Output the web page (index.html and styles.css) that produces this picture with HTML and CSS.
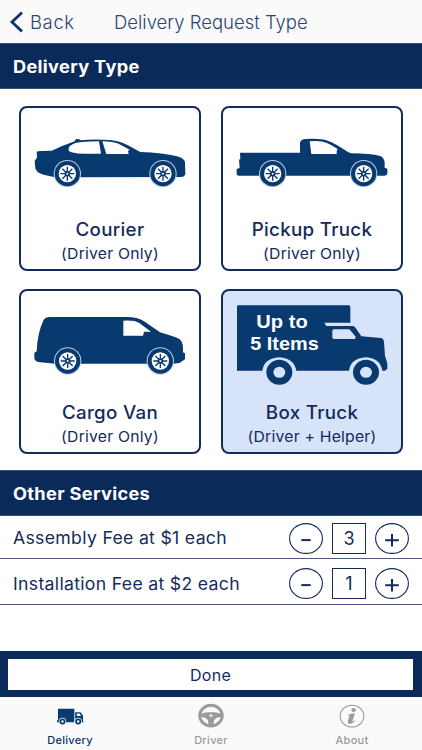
FILE: index.html
```html
<!DOCTYPE html>
<html lang="en">
<head>
    <meta charset="UTF-8">
    <meta name="viewport" content="width=device-width, initial-scale=1.0">
    <title>Delivery Request Type</title>
    <link rel="stylesheet" href="styles.css">
</head>
<body>
    <!-- wheel shared by the car, pickup and van -->
    <svg class="defs" width="0" height="0">
        <symbol id="wheel" viewBox="-44 -44 88 88">
            <circle r="41" fill="#b9cbe0"/>
            <circle r="38" fill="#083a70"/>
            <circle r="26" fill="#fff"/>
            <g stroke="#083a70" stroke-width="4">
                <path d="M0-21V21M-21 0H21M-15-15L15 15M-15 15L15-15"/>
            </g>
            <circle r="8" fill="#083a70"/>
            <circle r="3" fill="#fff"/>
        </symbol>
    </svg>

    <div class="app">
        <header class="navbar">
            <a class="back">
                <svg width="14" height="22" viewBox="0 0 14 22"><path d="M13 1.5L3 11L13 20.5" fill="none" stroke="#0b3468" stroke-width="2.8"/></svg>
                <span>Back</span>
            </a>
            <span class="nav-title">Delivery Request Type</span>
        </header>

        <h2 class="section"><span>Delivery Type</span></h2>

        <div class="cards">
            <div class="card">
                <svg class="vehicle" viewBox="33 24 534 300">
                    <path fill="#083a70" d="M80 155Q84 152 125 152Q160 136 194 124L198 117L208 118L211 121Q250 116 300 120Q331 123 352 135L391 156Q460 158 501 169Q523 175 525 186L526 222Q524 231 513 231L212 232H135L101 224Q79 219 76 205L74 183Q78 178 81 172Z"/>
                    <path fill="#fff" d="M179 139Q191 126 225 125L267 124L273 161H220Q184 160 176 152Q173 145 179 139ZM277 124Q313 124 333 135L359 149L354 153L356 162H289Z"/>
                    <use href="#wheel" x="128" y="177" width="88" height="88"/>
                    <use href="#wheel" x="415" y="177" width="88" height="88"/>
                </svg>
                <div class="name">Courier</div>
                <div class="crew">(Driver Only)</div>
            </div>
            <div class="card">
                <svg class="vehicle" viewBox="33 24 534 300">
                    <path fill="#083a70" d="M84 158H264V129Q265 119 279 117Q325 114 347 122Q368 129 408 156L417 160Q475 160 505 168Q516 173 518 187V203L526 206V221Q525 227 512 227H78L74 223V207L83 204L81 180L85 176Z"/>
                    <path fill="#fff" d="M293 124Q326 121 343 128Q359 134 377 147L374 153V162H298Z"/>
                    <use href="#wheel" x="138" y="177" width="88" height="88"/>
                    <use href="#wheel" x="411" y="177" width="88" height="88"/>
                </svg>
                <div class="name">Pickup Truck</div>
                <div class="crew">(Driver Only)</div>
            </div>
            <div class="card">
                <svg class="vehicle" viewBox="33 27 534 300">
                    <path fill="#083a70" d="M101 113Q106 105 117 105H350Q382 105 401 117L450 151Q493 163 508 171Q519 178 519 199V211L525 214V232L508 243L490 245H135L84 240Q74 237 73 229V213L80 208Q82 153 101 113Z"/>
                    <path fill="#fff" d="M340 116Q374 114 388 123L423 149H402L399 161H340Z"/>
                    <use href="#wheel" x="129" y="193" width="88" height="88"/>
                    <use href="#wheel" x="407" y="193" width="88" height="88"/>
                </svg>
                <div class="name">Cargo Van</div>
                <div class="crew">(Driver Only)</div>
            </div>
            <div class="card selected">
                <svg class="vehicle" viewBox="33 27 534 300">
                    <path fill="#083a70" d="M79 70H410Q415 70 415 75V122H337L343 132H421Q428 132 431 138L448 163L506 168Q515 169 516 180L519 222L526 244V260L519 266H75V74Q75 70 79 70Z"/>
                    <path fill="#d6e3f9" d="M366 142H412L430 163V171H366Q361 171 361 166V147Q361 142 366 142Z"/>
                    <path fill="#d6e3f9" d="M151 267Q155 229 202 226Q247 229 253 267ZM411 267Q415 229 462 226Q506 229 511 267Z"/>
                    <g fill="none" stroke="#083a70" stroke-width="21">
                        <ellipse cx="202" cy="271" rx="28.5" ry="27"/>
                        <ellipse cx="462" cy="271" rx="28.5" ry="27"/>
                    </g>
                    <g class="box-text">
                        <text x="133" y="138" textLength="154" lengthAdjust="spacingAndGlyphs">Up to</text>
                        <text x="115" y="204" textLength="205" lengthAdjust="spacingAndGlyphs">5 Items</text>
                    </g>
                </svg>
                <div class="name">Box Truck</div>
                <div class="crew">(Driver + Helper)</div>
            </div>
        </div>

        <h2 class="section other"><span>Other Services</span></h2>

        <div class="service">
            <span class="fee">Assembly Fee at $1 each</span>
            <div class="stepper">
                <svg class="step" viewBox="0 0 34 31"><ellipse cx="17" cy="15.5" rx="16.4" ry="14.9"/><path d="M12.3 17.1h9.4"/></svg>
                <span class="count">3</span>
                <svg class="step" viewBox="0 0 34 31"><ellipse cx="17" cy="15.5" rx="16.4" ry="14.9"/><path d="M10.2 17.3h13.6M17 11v12.6"/></svg>
            </div>
        </div>
        <div class="service">
            <span class="fee">Installation Fee at $2 each</span>
            <div class="stepper">
                <svg class="step" viewBox="0 0 34 31"><ellipse cx="17" cy="15.5" rx="16.4" ry="14.9"/><path d="M12.3 17.1h9.4"/></svg>
                <span class="count">1</span>
                <svg class="step" viewBox="0 0 34 31"><ellipse cx="17" cy="15.5" rx="16.4" ry="14.9"/><path d="M10.2 17.3h13.6M17 11v12.6"/></svg>
            </div>
        </div>

        <div class="done-bar">
            <button type="button" class="done">Done</button>
        </div>

        <nav class="tabs">
            <a class="tab active">
                <svg width="30" height="28" viewBox="0 0 30 28">
                    <path fill="#083a70" d="M2.500 6h17v14H1.500v-2h1ZM20.300 9.500h5.500l2.700 3.500v6h.5v1h-8.700Z"/>
                    <path fill="#fafafa" d="M22 11h3l1.500 2.500H22Z"/>
                    <g fill="#fafafa"><circle cx="7.200" cy="19.200" r="3.800"/><circle cx="23.500" cy="19.200" r="3.800"/></g>
                    <g fill="#fafafa" stroke="#083a70" stroke-width="1.900"><circle cx="7.200" cy="19.200" r="2.200"/><circle cx="23.500" cy="19.200" r="2.200"/></g>
                </svg>
                <span>Delivery</span>
            </a>
            <a class="tab">
                <svg width="30" height="28" viewBox="0 0 30 28">
                    <ellipse cx="15" cy="13.100" rx="11.700" ry="10.700" fill="none" stroke="#9b9b9b" stroke-width="3"/>
                    <path fill="#9b9b9b" d="M4 11.500Q8 10 12 9.700H18Q22 10 26 11.500V14.500Q20 14.500 18.200 18L17.500 23.500H12.500L11.800 18Q10 14.500 4 14.500Z"/>
                    <ellipse cx="15" cy="13" rx="1.800" ry="1.200" fill="#fafafa"/>
                </svg>
                <span>Driver</span>
            </a>
            <a class="tab">
                <svg width="30" height="28" viewBox="0 0 30 28">
                    <ellipse cx="15" cy="13.600" rx="12.300" ry="11.300" fill="none" stroke="#9b9b9b" stroke-width="1.200"/>
                    <ellipse cx="16.700" cy="7.200" rx="2.400" ry="2.100" fill="#9b9b9b"/>
                    <path fill="#9b9b9b" d="M11 12.500Q14.500 10.500 18 10.700L15.400 19Q15.200 20 18 18L18.300 18.600Q15 22 12 21.700Q10 21.200 10.700 18.700L12.300 13.700Q12.300 12.800 11.200 13.300Z"/>
                </svg>
                <span>About</span>
            </a>
        </nav>
    </div>
</body>
</html>
```
FILE: styles.css
```css
* {
    margin: 0;
    padding: 0;
    box-sizing: border-box;
}

body {
    font-family: Inter, "Liberation Sans", sans-serif;
    background-color: #fff;
    color: #142a5c;
}

.defs {
    position: absolute;
}

.app {
    width: 422px;
    height: 750px;
    display: flex;
    flex-direction: column;
    overflow: hidden;
}

/* Top navigation */
.navbar {
    height: 43px;
    display: flex;
    align-items: center;
    padding-left: 9px;
    background-color: #fafafa;
    color: #2b4673;
    font-size: 18.5px;
    font-weight: 300;
    white-space: nowrap;
}

.back {
    display: flex;
    align-items: center;
    gap: 7px;
    width: 105px;
}

.back span {
    letter-spacing: 0.6px;
}

.section {
    height: 46px;
    flex-shrink: 0;
    padding-left: 13px;
    background-color: #0a2b59;
    border-top: 1px solid #344f78;
    border-bottom: 1px solid #344f78;
    color: #fff;
    font-size: 17px;
    line-height: 46px;
    font-weight: 700;
    letter-spacing: 0.3px;
}

/* Slightly extended lettering */
.section span {
    display: inline-block;
    transform: scaleX(1.07);
    transform-origin: left;
}

/* Vehicle cards */
.cards {
    display: grid;
    grid-template-columns: 182px 182px;
    grid-auto-rows: 165px;
    gap: 18px 20px;
    padding: 17px 19px 16px;
}

.card {
    border: 2px solid #142a5c;
    border-radius: 8px;
    text-align: center;
    white-space: nowrap;
}

.card.selected {
    background-color: #d6e3f9;
}

.vehicle {
    display: block;
    width: 178px;
    height: 100px;
}

.box-text {
    fill: #fff;
    font-family: "Liberation Sans", sans-serif;
    font-size: 57px;
    font-weight: 700;
}

.name {
    margin-top: 10px;
    font-size: 18px;
    line-height: 24px;
    font-weight: 500;
    letter-spacing: 0.3px;
    transform: scaleX(1.04);
}

.crew {
    font-size: 15px;
    line-height: 24px;
    letter-spacing: 0.2px;
    transform: scaleX(1.05);
}

/* Extra services */
.service {
    height: 46px;
    flex-shrink: 0;
    display: flex;
    align-items: center;
    justify-content: space-between;
    padding: 4px 13px 0;
    border-bottom: 1px solid #55567f;
}

.other + .service {
    height: 43px;
    padding-top: 2px;
}

.fee {
    font-size: 17px;
    letter-spacing: 0.3px;
    transform: scaleX(1.038);
    transform-origin: left;
}

.stepper {
    display: flex;
    align-items: center;
    gap: 9px;
}

.step {
    width: 34px;
    height: 31px;
    fill: none;
    stroke: #142a5c;
    stroke-width: 1.1;
}

.step path {
    stroke-width: 2;
}

.count {
    width: 34px;
    height: 31px;
    border: 1px solid #142a5c;
    font-size: 18px;
    line-height: 30px;
    text-align: center;
}

.done-bar {
    height: 46px;
    flex-shrink: 0;
    margin-top: auto;
    padding: 8px 9px 7px 8px;
    background-color: #0a2b59;
}

.done {
    display: block;
    width: 100%;
    height: 31px;
    border: none;
    background-color: #fff;
    color: #142a5c;
    font-family: inherit;
    font-size: 16px;
    letter-spacing: 0.3px;
}

/* Bottom tabs */
.tabs {
    height: 53px;
    flex-shrink: 0;
    display: flex;
    justify-content: space-between;
    background-color: #fafafa;
    padding-top: 6px;
}

.tab {
    width: 140px;
    display: flex;
    flex-direction: column;
    align-items: center;
    color: #9b9b9b;
    font-size: 11px;
    line-height: 20px;
    font-weight: 500;
    letter-spacing: 0.3px;
}

.tab.active {
    color: #0b3468;
}
```
